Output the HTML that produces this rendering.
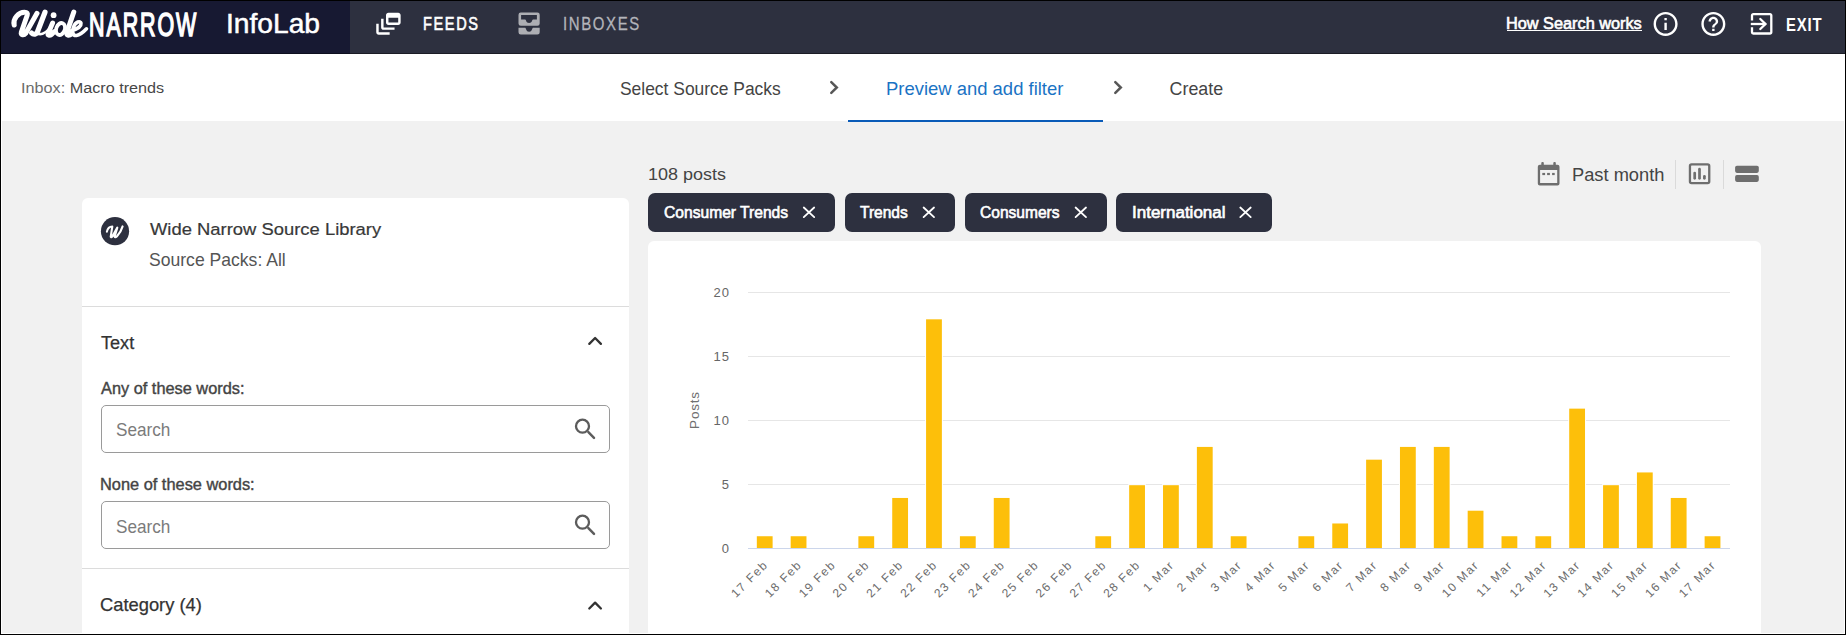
<!DOCTYPE html>
<html><head><meta charset="utf-8">
<style>
html,body{margin:0;padding:0;}
body{width:1846px;height:635px;overflow:hidden;position:relative;background:#000;font-family:"Liberation Sans",sans-serif;}
.abs{position:absolute;}
.t{position:absolute;line-height:1;white-space:nowrap;transform-origin:0 0;}
#nav{left:1px;top:1px;width:1844px;height:53px;background:#2d303f;}
#logo{left:1px;top:1px;width:349px;height:53px;background:#171932;}
#navshadow{left:1px;top:53px;width:1844px;height:1px;background:rgba(0,0,0,0.4);}
#hdr{left:1px;top:54px;width:1844px;height:67px;background:#fff;}
#main{left:1px;top:121px;width:1844px;height:513px;background:#fff;}
#gray{left:2px;top:121px;width:1842px;height:512px;background:#f1f1f1;}
#stepbar{left:848px;top:120px;width:255px;height:2px;background:#0a5bb8;}
#card1{left:82px;top:198px;width:547px;height:435px;background:#fff;border-radius:6px 6px 0 0;}
#card2{left:648px;top:241px;width:1113px;height:392px;background:#fff;border-radius:6px 6px 0 0;}
.div1{position:absolute;left:82px;width:547px;height:1px;background:#dcdcdc;}
.chip{position:absolute;top:193px;height:39px;background:#2d303f;border-radius:7px;}
.inp{position:absolute;left:101px;width:507px;height:46px;border:1px solid #9a9a9a;border-radius:5px;background:#fff;}
.vdiv{position:absolute;top:160px;width:1px;height:29px;background:#dadada;}
</style></head><body>
<div class="abs" id="nav"></div>
<div class="abs" id="logo"></div>
<div class="abs" id="navshadow"></div>
<div class="abs" id="hdr"></div>
<div class="abs" id="main"></div>
<div class="abs" id="gray"></div>
<div class="abs" id="stepbar"></div>
<div class="abs" id="card1"></div>
<div class="abs" id="card2"></div>
<div class="div1" style="top:306px"></div>
<div class="div1" style="top:568px"></div>
<div class="chip" style="left:648px;width:187px"></div>
<div class="chip" style="left:845px;width:110px"></div>
<div class="chip" style="left:965px;width:142px"></div>
<div class="chip" style="left:1116px;width:156px"></div>
<div class="inp" style="top:405px"></div>
<div class="inp" style="top:501px"></div>
<div class="vdiv" style="left:1675px"></div>
<div class="vdiv" style="left:1723px"></div>
<svg class="abs" style="left:100px;top:216px" width="30" height="30"><circle cx="15" cy="15.2" r="14.1" fill="#2d303f"/></svg>
<div class="abs" style="left:1507px;top:30px;width:135px;height:1px;background:#fff"></div>
<div class="t" id="narrow" style="left:88.73px;top:8.37px;font-size:33.8px;font-weight:400;color:#fff;transform:scaleX(0.6351);letter-spacing:3.0px;-webkit-text-stroke-width:1.6px">NARROW</div>
<div class="t" id="infolab" style="left:225.91px;top:11.28px;font-size:26.96px;font-weight:400;color:#fff;transform:scaleX(1.0455);letter-spacing:0px;-webkit-text-stroke-width:0.5px">InfoLab</div>
<div class="t" id="feeds" style="left:422.70px;top:15.28px;font-size:18.14px;font-weight:400;color:#fff;transform:scaleX(0.8045);letter-spacing:2.0px;-webkit-text-stroke-width:0.6px">FEEDS</div>
<div class="t" id="inboxes" style="left:563.19px;top:14.98px;font-size:18.49px;font-weight:400;color:#b4b5bb;transform:scaleX(0.8097);letter-spacing:2.0px;-webkit-text-stroke-width:0.3px">INBOXES</div>
<div class="t" id="how" style="left:1505.66px;top:15.77px;font-size:15.68px;font-weight:400;color:#fff;transform:scaleX(1.0392);letter-spacing:0px;-webkit-text-stroke-width:0.6px">How Search works</div>
<div class="t" id="exit" style="left:1785.59px;top:16.08px;font-size:18.26px;font-weight:700;color:#fff;transform:scaleX(0.8140);letter-spacing:1.0px;">EXIT</div>
<div class="t" id="inbox" style="left:21.45px;top:80.01px;font-size:15.4px;font-weight:400;color:#474747;transform:scaleX(1.0526);letter-spacing:0px;"><span style="color:#6b6b6b">Inbox:</span> Macro trends</div>
<div class="t" id="step1" style="left:620.02px;top:80.94px;font-size:17.83px;font-weight:400;color:#444;transform:scaleX(0.9773);letter-spacing:0px;">Select Source Packs</div>
<div class="t" id="step2" style="left:886.37px;top:80.94px;font-size:17.83px;font-weight:400;color:#1a73c4;transform:scaleX(1.0345);letter-spacing:0px;">Preview and add filter</div>
<div class="t" id="step3" style="left:1169.60px;top:80.94px;font-size:17.83px;font-weight:400;color:#444;transform:scaleX(1.0000);letter-spacing:0px;">Create</div>
<div class="t" id="posts" style="left:647.56px;top:165.84px;font-size:17.25px;font-weight:400;color:#444;transform:scaleX(1.0419);letter-spacing:0px;">108 posts</div>
<div class="t" id="chip1" style="left:663.80px;top:205.14px;font-size:15.83px;font-weight:400;color:#fff;transform:scaleX(0.9865);letter-spacing:0px;-webkit-text-stroke-width:0.6px">Consumer Trends</div>
<div class="t" id="chip2" style="left:860.30px;top:205.14px;font-size:15.83px;font-weight:400;color:#fff;transform:scaleX(0.9816);letter-spacing:0px;-webkit-text-stroke-width:0.6px">Trends</div>
<div class="t" id="chip3" style="left:980.20px;top:205.14px;font-size:15.83px;font-weight:400;color:#fff;transform:scaleX(0.9827);letter-spacing:0px;-webkit-text-stroke-width:0.6px">Consumers</div>
<div class="t" id="chip4" style="left:1131.63px;top:205.14px;font-size:15.83px;font-weight:400;color:#fff;transform:scaleX(1.0733);letter-spacing:0px;-webkit-text-stroke-width:0.6px">International</div>
<div class="t" id="past" style="left:1572.47px;top:166.97px;font-size:17.68px;font-weight:400;color:#444;transform:scaleX(1.0341);letter-spacing:0px;">Past month</div>
<div class="t" id="lib" style="left:149.70px;top:221.18px;font-size:17.2px;font-weight:400;color:#383838;transform:scaleX(1.0708);letter-spacing:0px;-webkit-text-stroke-width:0.2px">Wide Narrow Source Library</div>
<div class="t" id="packs" style="left:148.77px;top:251.19px;font-size:18.84px;font-weight:400;color:#555;transform:scaleX(0.9331);letter-spacing:0px;">Source Packs: All</div>
<div class="t" id="text" style="left:101.40px;top:334.21px;font-size:18.7px;font-weight:400;color:#333;transform:scaleX(0.9686);letter-spacing:0px;-webkit-text-stroke-width:0.25px">Text</div>
<div class="t" id="any" style="left:100.80px;top:379.98px;font-size:16.49px;font-weight:400;color:#444;transform:scaleX(0.9910);letter-spacing:0px;-webkit-text-stroke-width:0.4px">Any of these words:</div>
<div class="t" id="search1" style="left:115.98px;top:421.09px;font-size:18.6px;font-weight:400;color:#7b7b7b;transform:scaleX(0.9228);letter-spacing:0px;">Search</div>
<div class="t" id="none" style="left:100.41px;top:475.98px;font-size:16.49px;font-weight:400;color:#444;transform:scaleX(0.9929);letter-spacing:0px;-webkit-text-stroke-width:0.4px">None of these words:</div>
<div class="t" id="search2" style="left:115.98px;top:517.59px;font-size:18.6px;font-weight:400;color:#7b7b7b;transform:scaleX(0.9228);letter-spacing:0px;">Search</div>
<div class="t" id="cat" style="left:100.43px;top:595.89px;font-size:18.84px;font-weight:400;color:#333;transform:scaleX(0.9738);letter-spacing:0px;-webkit-text-stroke-width:0.25px">Category (4)</div>
<svg class="abs" style="left:0;top:0" width="1846" height="635" viewBox="0 0 1846 635">
<rect x="748.0" y="484.0" width="982.0" height="1" fill="#e6e6e6"/>
<rect x="748.0" y="420.0" width="982.0" height="1" fill="#e6e6e6"/>
<rect x="748.0" y="356.0" width="982.0" height="1" fill="#e6e6e6"/>
<rect x="748.0" y="292.0" width="982.0" height="1" fill="#e6e6e6"/>
<rect x="748.0" y="548.0" width="982.0" height="1" fill="#ccd6eb"/>
<rect x="755.82" y="535.24" width="17.8" height="12.76" fill="#fff"/>
<rect x="756.82" y="536.24" width="15.8" height="11.76" fill="#fdbf0a"/>
<rect x="789.67" y="535.24" width="17.8" height="12.76" fill="#fff"/>
<rect x="790.67" y="536.24" width="15.8" height="11.76" fill="#fdbf0a"/>
<rect x="857.38" y="535.24" width="17.8" height="12.76" fill="#fff"/>
<rect x="858.38" y="536.24" width="15.8" height="11.76" fill="#fdbf0a"/>
<rect x="891.23" y="496.96" width="17.8" height="51.04" fill="#fff"/>
<rect x="892.23" y="497.96" width="15.8" height="50.04" fill="#fdbf0a"/>
<rect x="925.07" y="318.32" width="17.8" height="229.68" fill="#fff"/>
<rect x="926.07" y="319.32" width="15.8" height="228.68" fill="#fdbf0a"/>
<rect x="958.92" y="535.24" width="17.8" height="12.76" fill="#fff"/>
<rect x="959.92" y="536.24" width="15.8" height="11.76" fill="#fdbf0a"/>
<rect x="992.77" y="496.96" width="17.8" height="51.04" fill="#fff"/>
<rect x="993.77" y="497.96" width="15.8" height="50.04" fill="#fdbf0a"/>
<rect x="1094.32" y="535.24" width="17.8" height="12.76" fill="#fff"/>
<rect x="1095.32" y="536.24" width="15.8" height="11.76" fill="#fdbf0a"/>
<rect x="1128.17" y="484.20" width="17.8" height="63.80" fill="#fff"/>
<rect x="1129.17" y="485.20" width="15.8" height="62.80" fill="#fdbf0a"/>
<rect x="1162.02" y="484.20" width="17.8" height="63.80" fill="#fff"/>
<rect x="1163.02" y="485.20" width="15.8" height="62.80" fill="#fdbf0a"/>
<rect x="1195.88" y="445.92" width="17.8" height="102.08" fill="#fff"/>
<rect x="1196.88" y="446.92" width="15.8" height="101.08" fill="#fdbf0a"/>
<rect x="1229.72" y="535.24" width="17.8" height="12.76" fill="#fff"/>
<rect x="1230.72" y="536.24" width="15.8" height="11.76" fill="#fdbf0a"/>
<rect x="1297.42" y="535.24" width="17.8" height="12.76" fill="#fff"/>
<rect x="1298.42" y="536.24" width="15.8" height="11.76" fill="#fdbf0a"/>
<rect x="1331.27" y="522.48" width="17.8" height="25.52" fill="#fff"/>
<rect x="1332.27" y="523.48" width="15.8" height="24.52" fill="#fdbf0a"/>
<rect x="1365.12" y="458.68" width="17.8" height="89.32" fill="#fff"/>
<rect x="1366.12" y="459.68" width="15.8" height="88.32" fill="#fdbf0a"/>
<rect x="1398.97" y="445.92" width="17.8" height="102.08" fill="#fff"/>
<rect x="1399.97" y="446.92" width="15.8" height="101.08" fill="#fdbf0a"/>
<rect x="1432.82" y="445.92" width="17.8" height="102.08" fill="#fff"/>
<rect x="1433.82" y="446.92" width="15.8" height="101.08" fill="#fdbf0a"/>
<rect x="1466.67" y="509.72" width="17.8" height="38.28" fill="#fff"/>
<rect x="1467.67" y="510.72" width="15.8" height="37.28" fill="#fdbf0a"/>
<rect x="1500.52" y="535.24" width="17.8" height="12.76" fill="#fff"/>
<rect x="1501.52" y="536.24" width="15.8" height="11.76" fill="#fdbf0a"/>
<rect x="1534.38" y="535.24" width="17.8" height="12.76" fill="#fff"/>
<rect x="1535.38" y="536.24" width="15.8" height="11.76" fill="#fdbf0a"/>
<rect x="1568.22" y="407.64" width="17.8" height="140.36" fill="#fff"/>
<rect x="1569.22" y="408.64" width="15.8" height="139.36" fill="#fdbf0a"/>
<rect x="1602.07" y="484.20" width="17.8" height="63.80" fill="#fff"/>
<rect x="1603.07" y="485.20" width="15.8" height="62.80" fill="#fdbf0a"/>
<rect x="1635.92" y="471.44" width="17.8" height="76.56" fill="#fff"/>
<rect x="1636.92" y="472.44" width="15.8" height="75.56" fill="#fdbf0a"/>
<rect x="1669.77" y="496.96" width="17.8" height="51.04" fill="#fff"/>
<rect x="1670.77" y="497.96" width="15.8" height="50.04" fill="#fdbf0a"/>
<rect x="1703.62" y="535.24" width="17.8" height="12.76" fill="#fff"/>
<rect x="1704.62" y="536.24" width="15.8" height="11.76" fill="#fdbf0a"/>
<text x="730" y="553.1" text-anchor="end" font-family="Liberation Sans" font-size="13" letter-spacing="1" fill="#666">0</text>
<text x="730" y="489.1" text-anchor="end" font-family="Liberation Sans" font-size="13" letter-spacing="1" fill="#666">5</text>
<text x="730" y="425.1" text-anchor="end" font-family="Liberation Sans" font-size="13" letter-spacing="1" fill="#666">10</text>
<text x="730" y="361.1" text-anchor="end" font-family="Liberation Sans" font-size="13" letter-spacing="1" fill="#666">15</text>
<text x="730" y="297.1" text-anchor="end" font-family="Liberation Sans" font-size="13" letter-spacing="1" fill="#666">20</text>
<text transform="translate(698.5,410) rotate(-90)" text-anchor="middle" font-family="Liberation Sans" font-size="13.5" letter-spacing="0.8" fill="#707070">Posts</text>
<text transform="translate(768.72,565.50) rotate(-45)" text-anchor="end" font-family="Liberation Sans" font-size="12" letter-spacing="1.5" fill="#6b6b6b">17 Feb</text>
<text transform="translate(802.57,565.50) rotate(-45)" text-anchor="end" font-family="Liberation Sans" font-size="12" letter-spacing="1.5" fill="#6b6b6b">18 Feb</text>
<text transform="translate(836.42,565.50) rotate(-45)" text-anchor="end" font-family="Liberation Sans" font-size="12" letter-spacing="1.5" fill="#6b6b6b">19 Feb</text>
<text transform="translate(870.27,565.50) rotate(-45)" text-anchor="end" font-family="Liberation Sans" font-size="12" letter-spacing="1.5" fill="#6b6b6b">20 Feb</text>
<text transform="translate(904.12,565.50) rotate(-45)" text-anchor="end" font-family="Liberation Sans" font-size="12" letter-spacing="1.5" fill="#6b6b6b">21 Feb</text>
<text transform="translate(937.97,565.50) rotate(-45)" text-anchor="end" font-family="Liberation Sans" font-size="12" letter-spacing="1.5" fill="#6b6b6b">22 Feb</text>
<text transform="translate(971.82,565.50) rotate(-45)" text-anchor="end" font-family="Liberation Sans" font-size="12" letter-spacing="1.5" fill="#6b6b6b">23 Feb</text>
<text transform="translate(1005.67,565.50) rotate(-45)" text-anchor="end" font-family="Liberation Sans" font-size="12" letter-spacing="1.5" fill="#6b6b6b">24 Feb</text>
<text transform="translate(1039.53,565.50) rotate(-45)" text-anchor="end" font-family="Liberation Sans" font-size="12" letter-spacing="1.5" fill="#6b6b6b">25 Feb</text>
<text transform="translate(1073.38,565.50) rotate(-45)" text-anchor="end" font-family="Liberation Sans" font-size="12" letter-spacing="1.5" fill="#6b6b6b">26 Feb</text>
<text transform="translate(1107.22,565.50) rotate(-45)" text-anchor="end" font-family="Liberation Sans" font-size="12" letter-spacing="1.5" fill="#6b6b6b">27 Feb</text>
<text transform="translate(1141.08,565.50) rotate(-45)" text-anchor="end" font-family="Liberation Sans" font-size="12" letter-spacing="1.5" fill="#6b6b6b">28 Feb</text>
<text transform="translate(1174.92,565.50) rotate(-45)" text-anchor="end" font-family="Liberation Sans" font-size="12" letter-spacing="1.5" fill="#6b6b6b">1 Mar</text>
<text transform="translate(1208.78,565.50) rotate(-45)" text-anchor="end" font-family="Liberation Sans" font-size="12" letter-spacing="1.5" fill="#6b6b6b">2 Mar</text>
<text transform="translate(1242.62,565.50) rotate(-45)" text-anchor="end" font-family="Liberation Sans" font-size="12" letter-spacing="1.5" fill="#6b6b6b">3 Mar</text>
<text transform="translate(1276.47,565.50) rotate(-45)" text-anchor="end" font-family="Liberation Sans" font-size="12" letter-spacing="1.5" fill="#6b6b6b">4 Mar</text>
<text transform="translate(1310.32,565.50) rotate(-45)" text-anchor="end" font-family="Liberation Sans" font-size="12" letter-spacing="1.5" fill="#6b6b6b">5 Mar</text>
<text transform="translate(1344.17,565.50) rotate(-45)" text-anchor="end" font-family="Liberation Sans" font-size="12" letter-spacing="1.5" fill="#6b6b6b">6 Mar</text>
<text transform="translate(1378.03,565.50) rotate(-45)" text-anchor="end" font-family="Liberation Sans" font-size="12" letter-spacing="1.5" fill="#6b6b6b">7 Mar</text>
<text transform="translate(1411.88,565.50) rotate(-45)" text-anchor="end" font-family="Liberation Sans" font-size="12" letter-spacing="1.5" fill="#6b6b6b">8 Mar</text>
<text transform="translate(1445.72,565.50) rotate(-45)" text-anchor="end" font-family="Liberation Sans" font-size="12" letter-spacing="1.5" fill="#6b6b6b">9 Mar</text>
<text transform="translate(1479.57,565.50) rotate(-45)" text-anchor="end" font-family="Liberation Sans" font-size="12" letter-spacing="1.5" fill="#6b6b6b">10 Mar</text>
<text transform="translate(1513.42,565.50) rotate(-45)" text-anchor="end" font-family="Liberation Sans" font-size="12" letter-spacing="1.5" fill="#6b6b6b">11 Mar</text>
<text transform="translate(1547.28,565.50) rotate(-45)" text-anchor="end" font-family="Liberation Sans" font-size="12" letter-spacing="1.5" fill="#6b6b6b">12 Mar</text>
<text transform="translate(1581.12,565.50) rotate(-45)" text-anchor="end" font-family="Liberation Sans" font-size="12" letter-spacing="1.5" fill="#6b6b6b">13 Mar</text>
<text transform="translate(1614.97,565.50) rotate(-45)" text-anchor="end" font-family="Liberation Sans" font-size="12" letter-spacing="1.5" fill="#6b6b6b">14 Mar</text>
<text transform="translate(1648.83,565.50) rotate(-45)" text-anchor="end" font-family="Liberation Sans" font-size="12" letter-spacing="1.5" fill="#6b6b6b">15 Mar</text>
<text transform="translate(1682.67,565.50) rotate(-45)" text-anchor="end" font-family="Liberation Sans" font-size="12" letter-spacing="1.5" fill="#6b6b6b">16 Mar</text>
<text transform="translate(1716.53,565.50) rotate(-45)" text-anchor="end" font-family="Liberation Sans" font-size="12" letter-spacing="1.5" fill="#6b6b6b">17 Mar</text>
</svg>
<svg class="abs" style="left:0;top:0" width="1846" height="635" viewBox="0 0 1846 635">
<g transform="translate(373.8,9.1) scale(1.22)" fill="#fff"><path d="M8 8H6v7c0 1.1.9 2 2 2h9v-2H8V8z"/><path d="M20 3h-8c-1.1 0-2 .9-2 2v6c0 1.1.9 2 2 2h8c1.1 0 2-.9 2-2V5c0-1.1-.9-2-2-2zm0 8h-8V7h8v4z"/><path d="M4 12H2v7c0 1.1.9 2 2 2h9v-2H4v-7z"/></g>
<path fill="#adaeb3" fill-rule="evenodd" d="M520.8 12.5H537.4A2.3 2.3 0 0 1 539.7 14.8V23.5A2.3 2.3 0 0 1 537.4 25.8H520.8A2.3 2.3 0 0 1 518.5 23.5V14.8A2.3 2.3 0 0 1 520.8 12.5Z M521.1 15.1H536.9V19.6H533C532 19.6 532.3 23.1 529.1 23.1C525.9 23.1 526.2 19.6 525.2 19.6H521.1Z"/>
<path fill="#adaeb3" d="M518.5 27.8H525.2C526.2 27.8 525.9 31.8 529.1 31.8C532.3 31.8 532 27.8 533 27.8H539.7V32.3A2.3 2.3 0 0 1 537.4 34.6H520.8A2.3 2.3 0 0 1 518.5 32.3Z"/>
<g transform="translate(1651.2,9.5) scale(1.2)" fill="#fff"><path d="M11 7h2v2h-2zm0 4h2v6h-2zm1-9C6.48 2 2 6.48 2 12s4.48 10 10 10 10-4.48 10-10S17.52 2 12 2zm0 18c-4.41 0-8-3.59-8-8s3.59-8 8-8 8 3.59 8 8-3.59 8-8 8z"/></g>
<g transform="translate(1698.95,9.5) scale(1.2)" fill="#fff"><path d="M11 18h2v-2h-2v2zm1-16C6.48 2 2 6.48 2 12s4.48 10 10 10 10-4.48 10-10S17.52 2 12 2zm0 18c-4.41 0-8-3.59-8-8s3.59-8 8-8 8 3.59 8 8-3.59 8-8 8zm0-14c-2.21 0-4 1.79-4 4h2c0-1.1.9-2 2-2s2 .9 2 2c0 2-3 1.75-3 5h2c0-2.25 3-2.5 3-5 0-2.21-1.79-4-4-4z"/></g>
<g fill="none" stroke="#fff" stroke-width="2.3"><path d="M1752 20.6V15.5A1.3 1.3 0 0 1 1753.3 14.2H1770A1.3 1.3 0 0 1 1771.3 15.5V32.2A1.3 1.3 0 0 1 1770 33.5H1753.3A1.3 1.3 0 0 1 1752 32.2V27.2"/><path d="M1750.8 24H1765.5"/><path d="M1760.3 19L1765.5 24L1760.3 29" stroke-linecap="round"/></g>
<path fill="#6e6e6e" fill-rule="evenodd" d="M1539.8 164.8H1557.5A2 2 0 0 1 1559.5 166.8V183.5A2 2 0 0 1 1557.5 185.5H1539.8A2 2 0 0 1 1537.8 183.5V166.8A2 2 0 0 1 1539.8 164.8Z M1540.1 170.1H1557.2V182.9H1540.1Z"/>
<g fill="#6e6e6e"><rect x="1541.3" y="162" width="2.5" height="4" rx="1"/><rect x="1553.3" y="162" width="2.5" height="4" rx="1"/><rect x="1542.3" y="172.9" width="2.8" height="2.2"/><rect x="1547.1" y="172.9" width="2.8" height="2.2"/><rect x="1552.1" y="172.9" width="2.6" height="2.2"/></g>
<rect x="1689.95" y="164.45" width="19.3" height="18.6" rx="1.6" fill="none" stroke="#6e6e6e" stroke-width="2.3"/>
<g stroke="#6e6e6e" stroke-width="2.7" stroke-linecap="round"><path d="M1694.7 173V178.3"/><path d="M1699.5 169.2V178.3"/><path d="M1704.4 176.3V178.3"/></g>
<g fill="#6e6e6e"><rect x="1735.1" y="165.8" width="23.7" height="7.1" rx="1.8"/><rect x="1735.1" y="175.1" width="23.7" height="6.8" rx="1.8"/></g>
<path d="M803.8 207.5L814.2 217.10000000000002M814.2 207.5L803.8 217.10000000000002" stroke="#fff" stroke-width="1.8" stroke-linecap="round"/>
<path d="M923.5999999999999 207.5L934.0 217.10000000000002M934.0 207.5L923.5999999999999 217.10000000000002" stroke="#fff" stroke-width="1.8" stroke-linecap="round"/>
<path d="M1075.6 207.5L1086.0 217.10000000000002M1086.0 207.5L1075.6 217.10000000000002" stroke="#fff" stroke-width="1.8" stroke-linecap="round"/>
<path d="M1240.3 207.5L1250.7 217.10000000000002M1250.7 207.5L1240.3 217.10000000000002" stroke="#fff" stroke-width="1.8" stroke-linecap="round"/>
<path d="M831.3 82.1L836.8 87.5L831.3 92.9" fill="none" stroke="#575757" stroke-width="2.5" stroke-linecap="round"/>
<path d="M1115.3 82.1L1120.8 87.5L1115.3 92.9" fill="none" stroke="#575757" stroke-width="2.5" stroke-linecap="round"/>
<path d="M589.3 343.9L595.1 338.0L600.9 343.9" fill="none" stroke="#333" stroke-width="2.3" stroke-linecap="round" stroke-linejoin="round"/>
<path d="M589.3 608.5L595.1 602.6L600.9 608.5" fill="none" stroke="#333" stroke-width="2.3" stroke-linecap="round" stroke-linejoin="round"/>
<circle cx="582.5" cy="426.2" r="6.5" fill="none" stroke="#5c5c5c" stroke-width="2.3"/><path d="M588.4 432.2L594 437.8" stroke="#5c5c5c" stroke-width="2.5" stroke-linecap="round"/>
<circle cx="582.5" cy="522.2" r="6.5" fill="none" stroke="#5c5c5c" stroke-width="2.3"/><path d="M588.4 528.2L594 533.8" stroke="#5c5c5c" stroke-width="2.5" stroke-linecap="round"/>
<path d="M106.9 231.6C107.6 228.2 109.6 226.6 112.3 226.5L110.7 236.8C110.9 237.6 111.8 237.3 112.3 236.4L117.3 227.6L114.6 236.6C115 237.6 116.2 237.1 117 236.3C119.5 233.5 121.6 230 122.6 226.4" fill="none" stroke="#fff" stroke-width="2.1" stroke-linecap="round" stroke-linejoin="round"/>
</svg>
<svg class="abs" style="left:0;top:0" width="100" height="54" fill="none" stroke="#fff" stroke-linecap="round" stroke-linejoin="round">
<path stroke-width="5" d="M14.2 25 C12.5 19 18.5 12.3 24.5 12.3 C27.3 12.3 27.8 13.3 27.2 15.2 L21.3 32.3 C20.5 35.2 23.8 35.6 25.6 33.4 L37 13.3"/>
<path stroke-width="5.2" d="M45 12.3 L37.6 31.5 C36.6 34.6 33.5 35 31.5 33"/>
<path stroke-width="2.6" d="M37.5 33 C40 35.5 45 33.5 48 30"/>
<path stroke-width="4.9" d="M52.6 23 L48.2 33.2 C47.5 35.3 49.5 36 51.5 34.5 L54.5 31.5"/>
<circle cx="53.6" cy="15.2" r="2.9" fill="#fff" stroke="none"/>
<ellipse cx="60.5" cy="29" rx="4.3" ry="6.2" transform="rotate(20 60.5 29)" stroke-width="3.8"/>
<path stroke-width="5" d="M73.8 12 L66.8 32.5 C66 35.5 69 36 71.5 34"/>
<path stroke-width="3.6" d="M70.5 31 C76 29.5 81.5 26.5 81 23.2 C80.5 20.5 75.5 21.5 73.5 27 C71.5 33 73.5 36 76.5 35.5 C80 35 83.5 32 86.5 28.8"/>
</svg>
</body></html>
